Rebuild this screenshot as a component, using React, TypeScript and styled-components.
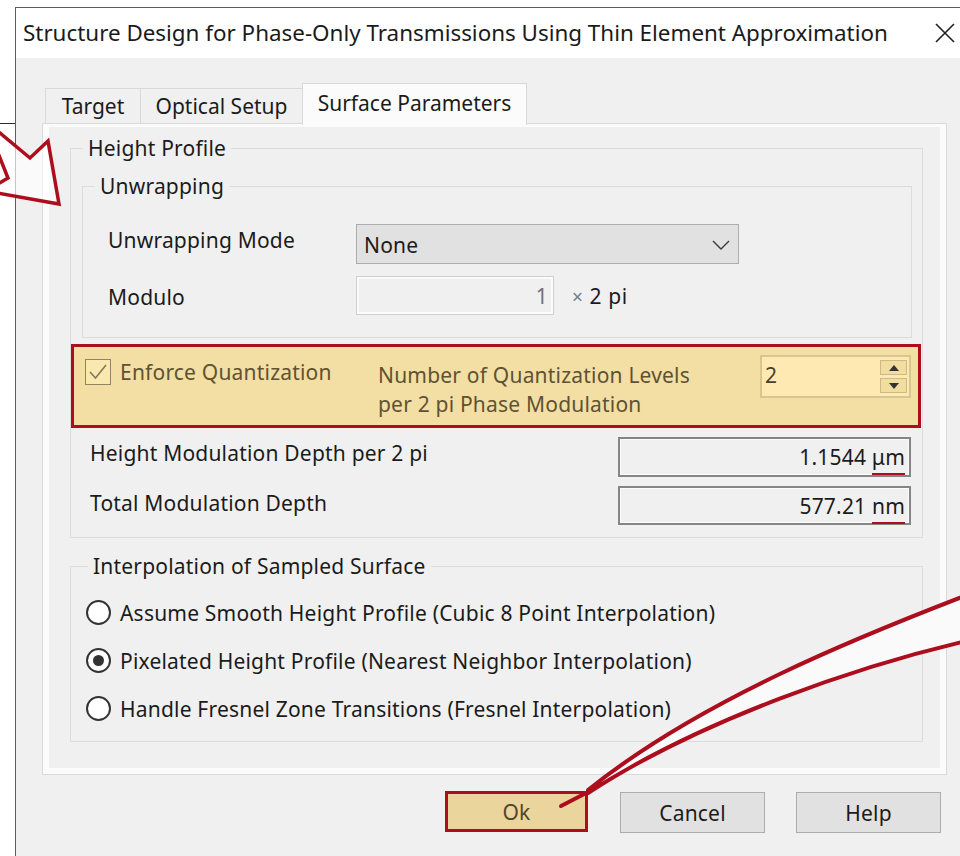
import React from 'react'
import styled, { createGlobalStyle } from 'styled-components'

const red = '#ad0e1e'

const GlobalStyle = createGlobalStyle`
  * { box-sizing: border-box; }
  html, body {
    margin: 0;
    padding: 0;
    background: #ffffff;
  }
  body {
    font-family: "Noto Sans", "Open Sans", sans-serif;
    color: #1b1b1b;
  }
`

const App = () => {
  return (
    <Page>
      <GlobalStyle />
      <Backdrop />
      <Dialog>
        <TitleBar>
          <Title>Structure Design for Phase-Only Transmissions Using Thin Element Approximation</Title>
          <CloseButton>
            <svg width="20" height="20" viewBox="0 0 20 20">
              <path d="M1 1 L19 19 M19 1 L1 19" stroke="#1f1f1f" strokeWidth="1.6" fill="none" />
            </svg>
          </CloseButton>
        </TitleBar>

        <Body>
          <TabStrip>
            <Tab $width={96}>Target</Tab>
            <Tab $width={163}>Optical Setup</Tab>
            <Tab $width={225} $active>Surface Parameters</Tab>
          </TabStrip>

          <Panel>
            <PanelInner>
              <HeightProfileBox>
                <Caption $indent={12}>Height Profile</Caption>

                <UnwrappingBox>
                  <Caption $indent={12}>Unwrapping</Caption>
                  <FormRow>
                    <FormLabel $top={4}>Unwrapping Mode</FormLabel>
                    <ComboBox>
                      <span>None</span>
                      <svg width="18" height="10" viewBox="0 0 18 10">
                        <path d="M1 1 L9 9 L17 1" stroke="#3a3a3a" strokeWidth="1.4" fill="none" />
                      </svg>
                    </ComboBox>
                  </FormRow>
                  <FormRow>
                    <FormLabel $top={9}>Modulo</FormLabel>
                    <DisabledInput>1</DisabledInput>
                    <UnitText>
                      <Times>×</Times> 2 pi
                    </UnitText>
                  </FormRow>
                </UnwrappingBox>

                <QuantBox>
                  <CheckGroup>
                    <CheckBox>
                      <svg width="22" height="22" viewBox="0 0 22 22">
                        <path d="M3 11 L8.5 17 L19 4" stroke="#857a57" strokeWidth="1.6" fill="none" />
                      </svg>
                    </CheckBox>
                    <QuantLabel>Enforce Quantization</QuantLabel>
                  </CheckGroup>
                  <QuantText>
                    Number of Quantization Levels
                    <br />
                    per 2 pi Phase Modulation
                  </QuantText>
                  <SpinBox>
                    <SpinValue>2</SpinValue>
                    <SpinButtons>
                      <SpinButton>
                        <svg width="10" height="6" viewBox="0 0 10 6"><path d="M0 6 L5 0 L10 6 Z" fill="#333" /></svg>
                      </SpinButton>
                      <SpinButton>
                        <svg width="10" height="6" viewBox="0 0 10 6"><path d="M0 0 L10 0 L5 6 Z" fill="#333" /></svg>
                      </SpinButton>
                    </SpinButtons>
                  </SpinBox>
                </QuantBox>

                <DepthRow>
                  <FormLabel $top={4}>Height Modulation Depth per 2 pi</FormLabel>
                  <ValueField $height={40}>
                    1.1544&nbsp;<Unit>μm</Unit>
                  </ValueField>
                </DepthRow>
                <DepthRow>
                  <FormLabel $top={5}>Total Modulation Depth</FormLabel>
                  <ValueField $height={39}>
                    577.21&nbsp;<Unit>nm</Unit>
                  </ValueField>
                </DepthRow>
              </HeightProfileBox>

              <InterpolationBox>
                <Caption $indent={17}>Interpolation of Sampled Surface</Caption>
                <RadioList>
                  <RadioRow>
                    <Radio />
                    <span>Assume Smooth Height Profile (Cubic 8 Point Interpolation)</span>
                  </RadioRow>
                  <RadioRow>
                    <Radio $checked />
                    <span>Pixelated Height Profile (Nearest Neighbor Interpolation)</span>
                  </RadioRow>
                  <RadioRow>
                    <Radio />
                    <span>Handle Fresnel Zone Transitions (Fresnel Interpolation)</span>
                  </RadioRow>
                </RadioList>
              </InterpolationBox>
            </PanelInner>
          </Panel>

          <ButtonRow>
            <Button $primary>Ok</Button>
            <Button>Cancel</Button>
            <Button>Help</Button>
          </ButtonRow>
        </Body>
      </Dialog>

      {/* callout arrows drawn on top of the dialog */}
      <Callouts width="960" height="856" viewBox="0 0 960 856">
        <polygon
          points="-12,123 30,158 48,141 59,204 -14,191 8,178 -4,148"
          fill="rgba(255,255,255,0.65)"
          stroke={red}
          strokeWidth="3.5"
          strokeLinejoin="miter"
        />
        <path
          d="M975 592 C 860 636, 700 700, 588 790 L 588 793 C 700 720, 860 665, 975 639 Z"
          fill="#fafafa"
          stroke={red}
          strokeWidth="4"
          strokeLinejoin="round"
        />
        <path d="M590 791 L561 806" stroke={red} strokeWidth="4" strokeLinecap="round" />
      </Callouts>
    </Page>
  )
}

const Page = styled.div`
  position: relative;
  width: 960px;
  height: 856px;
  overflow: hidden;
  display: flex;
  align-items: flex-start;
  padding-top: 7px;
  background: #ffffff;
`

const Backdrop = styled.div`
  width: 15px;
  flex-shrink: 0;
  margin-top: 116px;
  border-top: 1px solid #2b2b2b;
`

const Dialog = styled.div`
  width: 945px;
  height: 849px;
  flex-shrink: 0;
  display: flex;
  flex-direction: column;
  border-top: 1px solid #5c5c5c;
  border-left: 1px solid #5c5c5c;
`

const TitleBar = styled.div`
  height: 50px;
  display: flex;
  align-items: center;
  padding-left: 7px;
  background: #ffffff;
`

const Title = styled.div`
  flex: 1;
  font-size: 22.4px;
  line-height: 28px;
  color: #1a1a1a;
  white-space: nowrap;
`

const CloseButton = styled.div`
  width: 30px;
  height: 50px;
  display: flex;
  align-items: center;
  justify-content: center;
`

const Body = styled.div`
  flex: 1;
  display: flex;
  flex-direction: column;
  background: #f0f0f0;
  padding: 25px 13px 0 26px;
  font-size: 21px;
  letter-spacing: 0.2px;
`

const TabStrip = styled.div`
  position: relative;
  z-index: 1;
  display: flex;
  align-items: flex-end;
  height: 42px;
  padding-left: 3px;
  margin-bottom: -2px;
  letter-spacing: 0;
`

const Tab = styled.div<{ $width: number; $active?: boolean }>`
  width: ${p => p.$width}px;
  height: ${p => (p.$active ? 42 : 35)}px;
  margin-bottom: ${p => (p.$active ? 0 : 2)}px;
  padding-bottom: ${p => (p.$active ? 3 : 0)}px;
  display: flex;
  align-items: center;
  justify-content: center;
  border: 1px solid #d9d9d9;
  border-bottom: none;
  background: ${p => (p.$active ? '#fbfbfb' : '#f0f0f0')};
  line-height: 24px;
  white-space: nowrap;

  & + & {
    margin-left: -1px;
  }
`

const Panel = styled.div`
  height: 652px;
  border: 1px solid #d9d9d9;
  background: #f0f0f0;
`

const PanelInner = styled.div`
  height: 100%;
  display: flex;
  flex-direction: column;
  border-style: solid;
  border-color: #fbfbfb;
  border-width: 3px 6px 6px 6px;
`

const GroupBox = styled.div`
  display: flex;
  flex-direction: column;
  border: 1px solid #dcdcdc;
`

const Caption = styled.div<{ $indent: number }>`
  align-self: flex-start;
  margin: -13px 0 0 ${p => p.$indent}px;
  padding: 0 5px;
  background: #f0f0f0;
  line-height: 24px;
`

const HeightProfileBox = styled(GroupBox)`
  margin: 21px 17px 0 21px;
  padding-bottom: 12px;
`

const UnwrappingBox = styled(GroupBox)`
  margin: 26px 10px 0 11px;
  padding-bottom: 22px;
  gap: 12px;

  & > :nth-child(2) {
    margin-top: 14px;
  }
`

const FormRow = styled.div`
  display: flex;
  align-items: flex-start;
  padding-left: 25px;
`

const FormLabel = styled.div<{ $top: number }>`
  width: 248px;
  padding-top: ${p => p.$top}px;
  line-height: 24px;
  white-space: nowrap;
`

const ComboBox = styled.div`
  width: 383px;
  height: 40px;
  display: flex;
  align-items: center;
  justify-content: space-between;
  padding: 2px 8px 0 7px;
  background: #e1e1e1;
  border: 1px solid #adadad;
  line-height: 24px;
`

const DisabledInput = styled.div`
  width: 198px;
  height: 39px;
  display: flex;
  align-items: center;
  justify-content: flex-end;
  padding-right: 5px;
  background: #f0f0f0;
  border: 1px solid #cfcfcf;
  box-shadow: inset 0 0 0 2px #fbfbfb;
  color: #707070;
  line-height: 24px;
`

const UnitText = styled.div`
  margin-left: 18px;
  padding-top: 8px;
  line-height: 24px;
  white-space: pre;
  letter-spacing: 0.6px;
`

const Times = styled.span`
  color: #6f7f8f;
  font-size: 19px;
`

const QuantBox = styled.div`
  height: 84px;
  margin: 6px 1px 0 0;
  display: flex;
  align-items: flex-start;
  padding-left: 11px;
  border: 3px solid ${red};
  background: #f3dfa3;
  color: #5e5233;
`

const CheckGroup = styled.div`
  width: 293px;
  margin-top: 12px;
  display: flex;
  align-items: center;
  gap: 9px;
`

const CheckBox = styled.div`
  width: 26px;
  height: 26px;
  display: flex;
  align-items: center;
  justify-content: center;
  border: 1px solid #8f8463;
  background: #fbe7b0;
`

const QuantLabel = styled.div`
  line-height: 24px;
  white-space: nowrap;
`

const QuantText = styled.div`
  flex: 1;
  margin-top: 14px;
  line-height: 29px;
  white-space: nowrap;
`

const SpinBox = styled.div`
  width: 151px;
  height: 43px;
  margin: 8px 7px 0 0;
  display: flex;
  align-items: center;
  border: 2px solid #d8c58f;
  background: #fde9b1;
`

const SpinValue = styled.div`
  flex: 1;
  padding: 0 0 4px 3px;
  line-height: 24px;
  color: #4a4029;
`

const SpinButtons = styled.div`
  display: flex;
  flex-direction: column;
  gap: 3px;
  margin-right: 2px;
`

const SpinButton = styled.div`
  width: 27px;
  height: 15px;
  display: flex;
  align-items: center;
  justify-content: center;
  border: 1px solid #cdb983;
  background: #f1dda0;
`

const DepthRow = styled.div`
  display: flex;
  align-items: flex-start;
  padding: 0 11px 0 19px;
  margin-top: 9px;
`

const ValueField = styled.div<{ $height: number }>`
  width: 293px;
  height: ${p => p.$height}px;
  margin-left: auto;
  display: flex;
  align-items: flex-start;
  justify-content: flex-end;
  padding: 6px 4px 0 0;
  background: #f0f0f0;
  border: 2px solid #858585;
  box-shadow: inset 0 0 0 1px #fbfbfb;
  line-height: 24px;
  white-space: nowrap;
`

const Unit = styled.span`
  display: inline-block;
  line-height: 24px;
  padding-bottom: 4px;
  border-bottom: 2px solid ${red};
`

const InterpolationBox = styled(GroupBox)`
  margin: 28px 17px 0 21px;
  padding-bottom: 20px;
`

const RadioList = styled.div`
  display: flex;
  flex-direction: column;
  gap: 23px;
  margin-top: 22px;
  padding-left: 15px;
`

const RadioRow = styled.div`
  display: flex;
  align-items: center;
  gap: 9px;
  height: 25px;
  line-height: 24px;
  white-space: nowrap;
`

const Radio = styled.div<{ $checked?: boolean }>`
  width: 25px;
  height: 25px;
  flex-shrink: 0;
  border-radius: 50%;
  border: 2px solid #333333;
  background: #ffffff;
  display: flex;
  align-items: center;
  justify-content: center;

  &::after {
    content: '';
    display: ${p => (p.$checked ? 'block' : 'none')};
    width: 11px;
    height: 11px;
    border-radius: 50%;
    background: #333333;
  }
`

const ButtonRow = styled.div`
  display: flex;
  justify-content: flex-end;
  align-items: flex-start;
  gap: 31px;
  margin-top: 16px;
  padding-right: 6px;
`

const Button = styled.div<{ $primary?: boolean }>`
  width: ${p => (p.$primary ? 143 : 145)}px;
  height: 41px;
  margin-top: ${p => (p.$primary ? 0 : 1)}px;
  display: flex;
  align-items: center;
  justify-content: center;
  border: ${p => (p.$primary ? `3px solid ${red}` : '1px solid #adadad')};
  background: ${p => (p.$primary ? '#ead59c' : '#e1e1e1')};
  color: ${p => (p.$primary ? '#4f462e' : '#1b1b1b')};
  line-height: 24px;

  &:first-child {
    margin-right: 1px;
  }
`

const Callouts = styled.svg`
  position: absolute;
  left: 0;
  top: 0;
  pointer-events: none;
`

export default App
